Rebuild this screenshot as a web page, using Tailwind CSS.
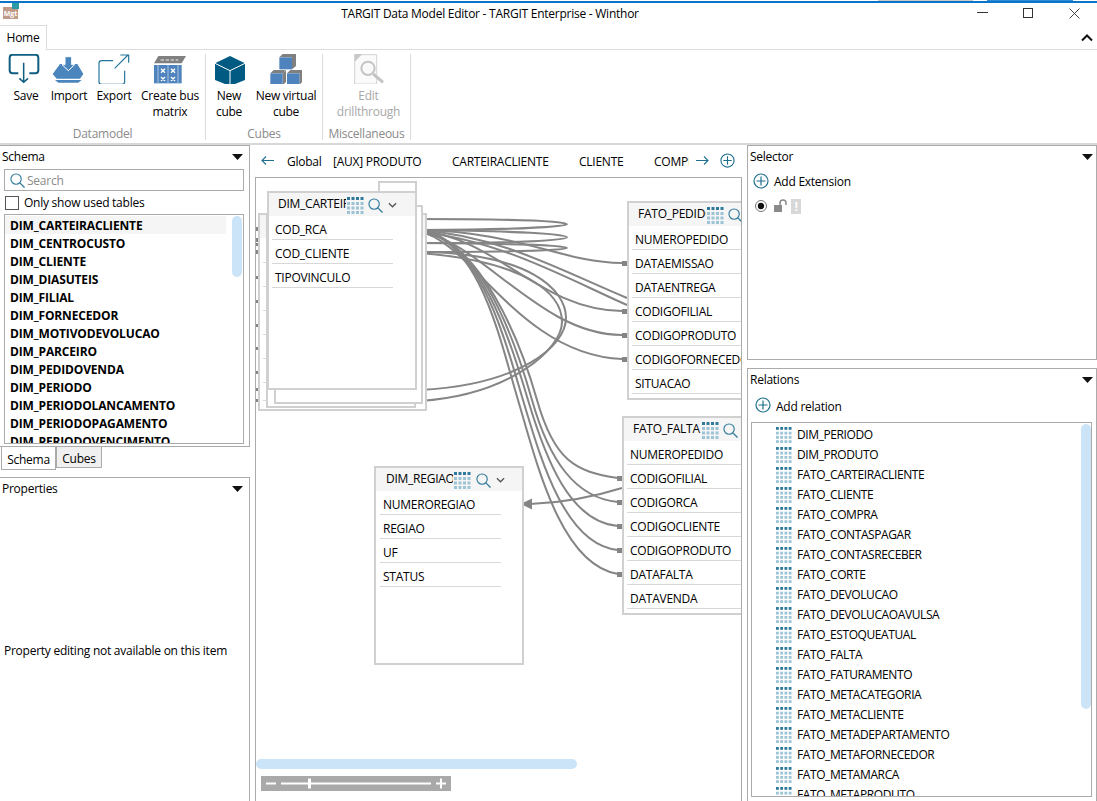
<!DOCTYPE html>
<html lang="en">
<head>
  <meta charset="UTF-8" />
  <title>TARGIT Data Model Editor</title>
  <script src="https://cdn.jsdelivr.net/npm/@tailwindcss/browser@4"></script>
</head>
<body class="bg-white text-black font-['Open_Sans',sans-serif] text-[12px] tracking-[-0.25px] leading-none">
  <svg class="hidden">
    <symbol id="tbl" viewBox="0 0 17 17">
      <g fill="#2f7a9c"><rect x="0" y="0" width="3" height="3"/><rect x="4.5" y="0" width="3" height="3"/><rect x="9" y="0" width="3" height="3"/><rect x="13.5" y="0" width="3" height="3"/></g>
      <g fill="#9cc3d6"><rect x="0" y="5" width="3" height="3"/><rect x="4.5" y="5" width="3" height="3"/><rect x="9" y="5" width="3" height="3"/><rect x="13.5" y="5" width="3" height="3"/><rect x="0" y="9.5" width="3" height="3"/><rect x="4.5" y="9.5" width="3" height="3"/><rect x="9" y="9.5" width="3" height="3"/><rect x="13.5" y="9.5" width="3" height="3"/><rect x="0" y="14" width="3" height="3"/><rect x="4.5" y="14" width="3" height="3"/><rect x="9" y="14" width="3" height="3"/><rect x="13.5" y="14" width="3" height="3"/></g>
    </symbol>
    <symbol id="mag" viewBox="0 0 16 16">
      <circle cx="6.5" cy="6.5" r="5.5" fill="none" stroke="#2f7a9c" stroke-width="1.2"/><path d="M10.5 10.5L15.5 15.5" stroke="#2f7a9c" stroke-width="1.4"/>
    </symbol>
    <symbol id="plus" viewBox="0 0 16 16">
      <circle cx="8" cy="8" r="7" fill="none" stroke="#1f6f8f" stroke-width="1.2"/><path d="M8 3.5V12.5M3.5 8H12.5" stroke="#1f6f8f" stroke-width="1.2"/>
    </symbol>
    <symbol id="chev" viewBox="0 0 10 6">
      <path d="M1 1L5 5L9 1" fill="none" stroke="#555" stroke-width="1.4"/>
    </symbol>
  </svg>

  <div class="relative w-[1097px] h-[801px] overflow-hidden flex flex-col">
    <!-- what shows of the window behind, on the top pixel row -->
    <div class="absolute left-[878px] top-0 w-[95px] h-px bg-[#c9c9c9]"></div>
    <div class="absolute left-[987px] top-0 w-[86px] h-px bg-[#2f8ad6]"></div>

    <!-- title bar -->
    <div class="h-[24px] shrink-0 border-t-2 border-[#0a74c9] mt-px flex items-center relative">
      <div class="absolute left-[3px] top-[4px] w-[15px] h-[12px] bg-[#c09a88] text-white text-[7px] font-bold flex items-center justify-center tracking-normal">Mgt</div>
      <div class="absolute left-[12px] top-0 w-[7px] h-[6px] bg-[#2a9aa5]"></div>
      <div class="absolute left-[341px] top-[5px] w-[298px] text-center whitespace-nowrap">TARGIT Data Model Editor - TARGIT Enterprise - Winthor</div>
      <svg class="absolute left-[977px] top-[9px]" width="11" height="1"><rect width="11" height="1" fill="#333"/></svg>
      <svg class="absolute left-[1023px] top-[5px]" width="10" height="10"><rect x="0.5" y="0.5" width="9" height="9" fill="none" stroke="#333"/></svg>
      <svg class="absolute left-[1069px] top-[5px]" width="11" height="11"><path d="M0.5 0.5L10.5 10.5M10.5 0.5L0.5 10.5" stroke="#444"/></svg>
    </div>

    <!-- tabs -->
    <div class="h-[25px] shrink-0 border-b border-[#dcdcdc] relative">
      <div class="absolute left-0 top-0 w-[47px] h-[25px] bg-white border-t border-r border-[#dcdcdc] flex items-center justify-center">Home</div>
      <svg class="absolute left-[1081px] top-[9px]" width="12" height="8"><path d="M1 6.5L6 1.5L11 6.5" fill="none" stroke="#111" stroke-width="2"/></svg>
    </div>

    <!-- ribbon -->
    <div class="h-[95px] shrink-0 border-b-2 border-[#d8d8d8] flex pt-[4px]">
      <div class="w-[206px] h-[86px] border-r border-[#dcdcdc] flex flex-col">
        <div class="flex h-[68px] pl-[4px]">
          <div class="w-[44px] flex flex-col items-center">
            <svg class="-translate-x-[2px]" width="32" height="30" viewBox="24 12 96 90"><path d="M55 70H38Q29 70 29 61V23Q29 14 38 14H106Q115 14 115 23V61Q115 70 106 70H88" fill="none" stroke="#0f5d80" stroke-width="6"/><path d="M71 38V97M58 85L71 97L84 85" fill="none" stroke="#0f5d80" stroke-width="4.500"/></svg>
            <span class="mt-[6px]">Save</span>
          </div>
          <div class="w-[42px] flex flex-col items-center">
            <svg class="-translate-x-[1px]" width="32" height="30" viewBox="156 12 96 90"><path d="M158 72L180 42H195L205 62L215 42H232L250 72L240 86H170Z" fill="#4a86bd"/><path d="M165 90H245L235 98H175Z" fill="#4a86bd"/><path d="M195 20H215V44H224L205 62L186 44H195Z" fill="#4a86bd" stroke="#fff" stroke-width="3"/></svg>
            <span class="mt-[6px]">Import</span>
          </div>
          <div class="w-[48px] flex flex-col items-center">
            <svg width="32" height="30" viewBox="295 12 96 90"><path d="M340 32H306Q298 32 298 40V95Q298 103 306 103H367Q375 103 375 95V62" fill="none" stroke="#22759a" stroke-width="3.500"/><path d="M345 55L385 15M362 15H387V38" fill="none" stroke="#22759a" stroke-width="3.500"/></svg>
            <span class="mt-[6px]">Export</span>
          </div>
          <div class="w-[64px] flex flex-col items-center">
            <svg width="32" height="30" viewBox="462 12 96 90"><path d="M475 18H558L545 40H462Z" fill="#808080"/><path d="M482 30H535" stroke="#eee" stroke-width="3" stroke-dasharray="10 5"/><rect x="462" y="45" width="83" height="55" fill="#4f83bd"/><path d="M474 45V100M504 45V100M534 45V100" stroke="#a9c6e2" stroke-width="3"/><path d="M483 56L495 68M495 56L483 68M513 56L525 68M525 56L513 68M483 81L495 93M495 81L483 93M513 81L525 93M525 81L513 93" stroke="#fff" stroke-width="4"/></svg>
            <span class="mt-[5px] text-center leading-[16px] -translate-y-[1px]">Create bus<br>matrix</span>
          </div>
        </div>
        <div class="text-center text-[#8a8a8a] mt-[6px]">Datamodel</div>
      </div>
      <div class="w-[117px] h-[86px] border-r border-[#dcdcdc] flex flex-col">
        <div class="flex h-[68px] pl-[4px]">
          <div class="w-[38px] flex flex-col items-center">
            <svg class="translate-x-[1px]" width="32" height="30" viewBox="27 12 96 90"><path d="M75 18L120 40V90L75 108L30 90V40Z" fill="#005a82"/><path d="M30 40L75 62L120 40M75 62V108" fill="none" stroke="#fff" stroke-width="3"/></svg>
            <span class="mt-[5px] text-center leading-[16px] -translate-y-[1px]">New<br>cube</span>
          </div>
          <div class="w-[72px] ml-[2px] flex flex-col items-center">
            <svg width="32" height="30" viewBox="194 12 96 90">
              <path d="M222 22L232 12H272L260 22ZM260 22L272 12V48L260 58Z" fill="#808080"/><rect x="222" y="22" width="38" height="36" fill="#4f83bd"/>
              <path d="M195 70L205 60H240L232 70ZM232 70L242 60V96L232 106Z" fill="#808080"/><rect x="195" y="70" width="37" height="36" fill="#4f83bd"/>
              <path d="M245 70L255 60H290L282 70ZM282 70L290 60V96L282 106Z" fill="#808080"/><rect x="245" y="70" width="37" height="36" fill="#4f83bd"/>
            </svg>
            <span class="mt-[5px] text-center leading-[16px] -translate-y-[1px]">New virtual<br>cube</span>
          </div>
        </div>
        <div class="text-center text-[#8a8a8a] mt-[6px]">Cubes</div>
      </div>
      <div class="w-[88px] h-[86px] border-r border-[#dcdcdc] flex flex-col">
        <div class="h-[68px] flex flex-col items-center translate-x-[2px]">
          <svg width="32" height="30" viewBox="442 12 96 90"><path d="M447 14H513V102H447Z" fill="#fafafa" stroke="#d4d4d4" stroke-width="3"/><path d="M447 12H470L447 35Z" fill="#c8c8c8"/><circle cx="487" cy="55" r="20" fill="none" stroke="#c4c4c4" stroke-width="6"/><path d="M503 72L532 97" stroke="#c4c4c4" stroke-width="9"/></svg>
          <span class="mt-[5px] text-center leading-[16px] -translate-y-[1px] text-[#a8a8a8]">Edit<br>drillthrough</span>
        </div>
        <div class="text-center text-[#8a8a8a] mt-[6px]">Miscellaneous</div>
      </div>
    </div>

    <div class="flex flex-1 min-h-0">
      <!-- left column -->
      <div class="w-[250px] shrink-0 flex flex-col">
        <div class="h-[302px] border-r border-b border-t border-[#ababab] relative">
          <div class="absolute left-[2px] top-[5px]">Schema</div>
          <svg class="absolute left-[232px] top-[8px]" width="11" height="6"><path d="M0 0H11L5.5 6Z" fill="#111"/></svg>
          <div class="absolute left-[4px] top-[23px] w-[240px] h-[22px] border border-[#ababab] flex items-center pl-[5px] pt-[1px] gap-[2px] text-[#8a8a8a]">
            <svg width="15" height="15"><use href="#mag"/></svg>Search
          </div>
          <div class="absolute left-[5px] top-[50px] flex items-center gap-[5px]">
            <span class="block w-[14px] h-[14px] border border-[#555]"></span>Only show used tables
          </div>
          <div class="absolute left-[4px] top-[68px] w-[240px] h-[230px] border border-[#ababab] overflow-hidden pt-[1px] font-bold tracking-[-0.15px]">
            <div class="h-[18px] pl-[5px] pt-[2px] w-[221px] flex items-center bg-[#f5f5f5]">DIM_CARTEIRACLIENTE</div>
            <div class="h-[18px] pl-[5px] pt-[2px] flex items-center">DIM_CENTROCUSTO</div>
            <div class="h-[18px] pl-[5px] pt-[2px] flex items-center">DIM_CLIENTE</div>
            <div class="h-[18px] pl-[5px] pt-[2px] flex items-center">DIM_DIASUTEIS</div>
            <div class="h-[18px] pl-[5px] pt-[2px] flex items-center">DIM_FILIAL</div>
            <div class="h-[18px] pl-[5px] pt-[2px] flex items-center">DIM_FORNECEDOR</div>
            <div class="h-[18px] pl-[5px] pt-[2px] flex items-center">DIM_MOTIVODEVOLUCAO</div>
            <div class="h-[18px] pl-[5px] pt-[2px] flex items-center">DIM_PARCEIRO</div>
            <div class="h-[18px] pl-[5px] pt-[2px] flex items-center">DIM_PEDIDOVENDA</div>
            <div class="h-[18px] pl-[5px] pt-[2px] flex items-center">DIM_PERIODO</div>
            <div class="h-[18px] pl-[5px] pt-[2px] flex items-center">DIM_PERIODOLANCAMENTO</div>
            <div class="h-[18px] pl-[5px] pt-[2px] flex items-center">DIM_PERIODOPAGAMENTO</div>
            <div class="h-[18px] pl-[5px] pt-[2px] flex items-center">DIM_PERIODOVENCIMENTO</div>
            <div class="absolute left-[227px] top-[1px] w-[10px] h-[61px] rounded-[5px] bg-[#cce4f7]"></div>
          </div>
        </div>
        <div class="h-[30px] border-r border-transparent relative">
          <div class="absolute left-[1px] top-0 w-[55px] h-[23px] border-x border-b border-[#ababab] bg-white pt-[3px] flex items-center justify-center">Schema</div>
          <div class="absolute left-[56px] top-0 w-[46px] h-[21px] border-x border-b border-[#ababab] bg-[#f0f0f0] pt-[3px] flex items-center justify-center">Cubes</div>
        </div>
        <div class="flex-1 border-r border-t border-[#ababab] relative">
          <div class="absolute left-[2px] top-[5px]">Properties</div>
          <svg class="absolute left-[232px] top-[8px]" width="11" height="6"><path d="M0 0H11L5.5 6Z" fill="#111"/></svg>
          <div class="absolute left-[4px] top-[167px] whitespace-nowrap">Property editing not available on this item</div>
        </div>
      </div>

      <!-- canvas column -->
      <div class="w-[497px] shrink-0 flex flex-col">
        <div class="h-[32px] shrink-0 relative">
          <svg class="absolute left-[11px] top-[11px]" width="13" height="9"><path d="M13 4.5H1M5 0.5L1 4.5L5 8.5" fill="none" stroke="#1f6f8f" stroke-width="1.1"/></svg>
          <span class="absolute left-[37px] top-[11px]">Global</span>
          <span class="absolute left-[83px] top-[11px]">[AUX] PRODUTO</span>
          <span class="absolute left-[202px] top-[11px]">CARTEIRACLIENTE</span>
          <span class="absolute left-[329px] top-[11px]">CLIENTE</span>
          <span class="absolute left-[404px] top-[11px] w-[35px] overflow-hidden whitespace-nowrap">COMPRA</span>
          <svg class="absolute left-[446px] top-[11px]" width="13" height="9"><path d="M0 4.5H12M8 0.5L12 4.5L8 8.5" fill="none" stroke="#1f6f8f" stroke-width="1.1"/></svg>
          <svg class="absolute left-[470px] top-[8px]" width="15" height="15"><use href="#plus"/></svg>
        </div>

        <div class="relative flex-1 ml-[5px] w-[487px] border-t border-x border-[#ababab] overflow-hidden">
          <!-- wires, drawn in page coordinates -->
          <svg class="absolute left-0 top-0" width="485" height="623" viewBox="256 178 485 623" fill="none" stroke="#858585" stroke-width="2">
            <path d="M420 219C616 219 616 229 420 230"/>
            <path d="M420 230C616 232 616 243 420 243"/>
            <path d="M420 243C616 244 616 252 420 252"/>
            <path d="M420 252C530 253 566 290 566 318S520 385 420 390"/>
            <path d="M420 253C530 262 562 295 562 322S510 395 420 401"/>
            <path d="M420 230C520 232 560 262 622 263"/>
            <path d="M420 230C500 236 560 270 627 298"/>
            <path d="M420 232C500 240 570 280 627 305"/>
            <path d="M420 230C500 240 540 310 622 311"/>
            <path d="M420 232C480 240 540 335 622 335"/>
            <path d="M420 232C470 240 520 355 622 359"/>
            <path d="M420 230C480 240 500 340 518 400S560 565 618 574"/>
            <path d="M420 230C480 240 505 340 523 400S565 545 618 550"/>
            <path d="M420 230C480 240 510 340 528 400S570 522 618 526"/>
            <path d="M420 230C480 240 515 340 532 400S575 498 618 502"/>
            <path d="M420 230C480 240 520 340 537 400S575 472 618 478"/>
            <path d="M622 488C590 498 560 503 530 504"/>
            <path d="M523 504L531 500V508Z" fill="#858585"/>
            <g fill="#858585" stroke="none">
              <rect x="622" y="261" width="5" height="5"/><rect x="622" y="309" width="5" height="5"/><rect x="622" y="333" width="5" height="5"/><rect x="622" y="357" width="5" height="5"/>
              <rect x="617" y="476" width="5" height="5"/><rect x="617" y="500" width="5" height="5"/><rect x="617" y="524" width="5" height="5"/><rect x="617" y="548" width="5" height="5"/><rect x="617" y="572" width="5" height="5"/>
              <rect x="256" y="227" width="2" height="4"/><rect x="256" y="238" width="2" height="4"/><rect x="256" y="243" width="2" height="3"/><rect x="256" y="250" width="2" height="4"/><rect x="256" y="276" width="2" height="3"/><rect x="256" y="300" width="2" height="3"/><rect x="256" y="324" width="2" height="3"/><rect x="256" y="347" width="2" height="3"/><rect x="256" y="371" width="2" height="3"/><rect x="256" y="388" width="2" height="3"/><rect x="256" y="399" width="2" height="3"/>
            </g>
          </svg>

          <!-- stacked cards behind DIM_CARTEIRACLIENTE -->
          <div class="absolute left-[122px] top-[3px] w-[39px] h-[60px] border-2 border-[#d0d0d0] bg-white"></div>
          <div class="absolute left-[2px] top-[35px] w-[169px] h-[198px] border-2 border-[#d0d0d0] bg-white">
            <div class="h-[23px] bg-[#f5f5f5]"></div>
            <div class="w-[5px] ml-[3px] mt-[24px] h-[24px] border-t border-[#d8d8d8]"></div>
            <div class="w-[5px] ml-[3px] h-[24px] border-t border-[#d8d8d8]"></div>
            <div class="w-[5px] ml-[3px] h-[24px] border-t border-[#d8d8d8]"></div>
            <div class="w-[5px] ml-[3px] h-[24px] border-t border-[#d8d8d8]"></div>
            <div class="w-[5px] ml-[3px] h-[24px] border-t border-[#d8d8d8]"></div>
            <div class="w-[5px] ml-[3px] h-[18px] border-t border-[#d8d8d8]"></div>
            <div class="w-[5px] ml-[3px] border-t border-[#d8d8d8]"></div>
          </div>
          <div class="absolute left-[10px] top-[35px] w-[150px] h-[195px] border-2 border-[#d0d0d0] bg-white"></div>
          <div class="absolute left-[18px] top-[27px] w-[149px] h-[199px] border-2 border-[#d0d0d0] bg-white"></div>

          <!-- DIM_CARTEIRACLIENTE -->
          <div class="absolute left-[11px] top-[13px] w-[150px] h-[199px] border-2 border-[#d0d0d0] bg-white">
            <div class="h-[23px] bg-[#f5f5f5] relative">
              <span class="absolute left-[9px] top-[5px] w-[68px] overflow-hidden whitespace-nowrap">DIM_CARTEIRACLIENTE</span>
              <svg class="absolute left-[78px] top-[4px]" width="17" height="17"><use href="#tbl"/></svg>
              <svg class="absolute left-[99px] top-[5px]" width="15" height="15"><use href="#mag"/></svg>
              <svg class="absolute left-[119px] top-[9px]" width="9" height="6"><use href="#chev"/></svg>
            </div>
            <div class="ml-[3px] w-[121px]">
              <div class="h-[24px] border-b border-[#d8d8d8] flex items-center pl-[3px] pt-[4px]">COD_RCA</div>
              <div class="h-[24px] border-b border-[#d8d8d8] flex items-center pl-[3px] pt-[4px]">COD_CLIENTE</div>
              <div class="h-[24px] border-b border-[#d8d8d8] flex items-center pl-[3px] pt-[4px]">TIPOVINCULO</div>
            </div>
          </div>

          <!-- FATO_PEDIDOVENDA -->
          <div class="absolute left-[371px] top-[23px] w-[130px] h-[199px] border-2 border-r-0 border-[#d0d0d0] bg-white">
            <div class="h-[23px] bg-[#f5f5f5] relative">
              <span class="absolute left-[9px] top-[5px] w-[68px] overflow-hidden whitespace-nowrap">FATO_PEDIDOVENDA</span>
              <svg class="absolute left-[78px] top-[4px]" width="17" height="17"><use href="#tbl"/></svg>
              <svg class="absolute left-[99px] top-[5px]" width="15" height="15"><use href="#mag"/></svg>
            </div>
            <div class="ml-[3px]">
              <div class="h-[24px] border-b border-[#d8d8d8] flex items-center pl-[3px] pt-[4px] whitespace-nowrap">NUMEROPEDIDO</div>
              <div class="h-[24px] border-b border-[#d8d8d8] flex items-center pl-[3px] pt-[4px] whitespace-nowrap">DATAEMISSAO</div>
              <div class="h-[24px] border-b border-[#d8d8d8] flex items-center pl-[3px] pt-[4px] whitespace-nowrap">DATAENTREGA</div>
              <div class="h-[24px] border-b border-[#d8d8d8] flex items-center pl-[3px] pt-[4px] whitespace-nowrap">CODIGOFILIAL</div>
              <div class="h-[24px] border-b border-[#d8d8d8] flex items-center pl-[3px] pt-[4px] whitespace-nowrap">CODIGOPRODUTO</div>
              <div class="h-[24px] border-b border-[#d8d8d8] flex items-center pl-[3px] pt-[4px] whitespace-nowrap">CODIGOFORNECEDOR</div>
              <div class="h-[24px] border-b border-[#d8d8d8] flex items-center pl-[3px] pt-[4px] whitespace-nowrap">SITUACAO</div>
            </div>
          </div>

          <!-- FATO_FALTA -->
          <div class="absolute left-[366px] top-[238px] w-[135px] h-[199px] border-2 border-r-0 border-[#d0d0d0] bg-white">
            <div class="h-[23px] bg-[#f5f5f5] relative">
              <span class="absolute left-[9px] top-[5px] w-[68px] overflow-hidden whitespace-nowrap">FATO_FALTA</span>
              <svg class="absolute left-[78px] top-[4px]" width="17" height="17"><use href="#tbl"/></svg>
              <svg class="absolute left-[99px] top-[5px]" width="15" height="15"><use href="#mag"/></svg>
            </div>
            <div class="ml-[3px]">
              <div class="h-[24px] border-b border-[#d8d8d8] flex items-center pl-[3px] pt-[4px]">NUMEROPEDIDO</div>
              <div class="h-[24px] border-b border-[#d8d8d8] flex items-center pl-[3px] pt-[4px]">CODIGOFILIAL</div>
              <div class="h-[24px] border-b border-[#d8d8d8] flex items-center pl-[3px] pt-[4px]">CODIGORCA</div>
              <div class="h-[24px] border-b border-[#d8d8d8] flex items-center pl-[3px] pt-[4px]">CODIGOCLIENTE</div>
              <div class="h-[24px] border-b border-[#d8d8d8] flex items-center pl-[3px] pt-[4px]">CODIGOPRODUTO</div>
              <div class="h-[24px] border-b border-[#d8d8d8] flex items-center pl-[3px] pt-[4px]">DATAFALTA</div>
              <div class="h-[24px] border-b border-[#d8d8d8] flex items-center pl-[3px] pt-[4px]">DATAVENDA</div>
            </div>
          </div>

          <!-- DIM_REGIAO -->
          <div class="absolute left-[118px] top-[288px] w-[150px] h-[199px] border-2 border-[#d0d0d0] bg-white">
            <div class="h-[23px] bg-[#f5f5f5] relative">
              <span class="absolute left-[10px] top-[5px] w-[67px] overflow-hidden whitespace-nowrap">DIM_REGIAO</span>
              <svg class="absolute left-[78px] top-[4px]" width="17" height="17"><use href="#tbl"/></svg>
              <svg class="absolute left-[100px] top-[5px]" width="15" height="15"><use href="#mag"/></svg>
              <svg class="absolute left-[120px] top-[9px]" width="9" height="6"><use href="#chev"/></svg>
            </div>
            <div class="ml-[4px] w-[121px]">
              <div class="h-[24px] border-b border-[#d8d8d8] flex items-center pl-[3px] pt-[4px]">NUMEROREGIAO</div>
              <div class="h-[24px] border-b border-[#d8d8d8] flex items-center pl-[3px] pt-[4px]">REGIAO</div>
              <div class="h-[24px] border-b border-[#d8d8d8] flex items-center pl-[3px] pt-[4px]">UF</div>
              <div class="h-[24px] border-b border-[#d8d8d8] flex items-center pl-[3px] pt-[4px]">STATUS</div>
            </div>
          </div>

          <!-- scrollbar and zoom -->
          <div class="absolute left-0 top-[581px] w-[321px] h-[10px] rounded-[5px] bg-[#cce4f7]"></div>
          <div class="absolute left-[5px] top-[598px] w-[190px] h-[15px] bg-[#a9a9a9]">
            <svg width="190" height="15" fill="white"><rect x="5" y="6.500" width="10" height="2"/><rect x="20" y="6.500" width="150" height="2"/><rect x="47" y="2.500" width="3" height="10"/><rect x="175" y="6.500" width="10" height="2"/><rect x="179" y="2.500" width="2" height="10"/></svg>
          </div>
        </div>
      </div>

      <!-- right column -->
      <div class="w-[350px] shrink-0 flex flex-col">
        <div class="h-[215px] border border-[#ababab] relative">
          <div class="absolute left-[2px] top-[5px]">Selector</div>
          <svg class="absolute left-[334px] top-[8px]" width="11" height="6"><path d="M0 0H11L5.500 6Z" fill="#111"/></svg>
          <svg class="absolute left-[5px] top-[27px]" width="16" height="16"><use href="#plus"/></svg>
          <div class="absolute left-[26px] top-[30px]">Add Extension</div>
          <svg class="absolute left-[6px] top-[53px]" width="14" height="14"><circle cx="7" cy="7" r="5.500" fill="none" stroke="#777"/><circle cx="7" cy="7" r="3.200" fill="#111"/></svg>
          <svg class="absolute left-[26px] top-[53px]" width="13" height="13"><path d="M6 6V4Q6 1 9 1T12 4V6" fill="none" stroke="#8a8a8a" stroke-width="1.500"/><rect x="0" y="6" width="8" height="7" fill="#8a8a8a"/></svg>
          <div class="absolute left-[43px] top-[53px] w-[10px] h-[15px] bg-[#d8d8d8] text-white font-bold flex items-center justify-center">!</div>
        </div>
        <div class="h-[8px] shrink-0"></div>
        <div class="flex-1 border-l border-t border-r border-[#ababab] relative">
          <div class="absolute left-[2px] top-[5px]">Relations</div>
          <svg class="absolute left-[334px] top-[8px]" width="11" height="6"><path d="M0 0H11L5.500 6Z" fill="#111"/></svg>
          <svg class="absolute left-[7px] top-[28px]" width="16" height="16"><use href="#plus"/></svg>
          <div class="absolute left-[28px] top-[32px]">Add relation</div>
          <div class="absolute left-[3px] top-[53px] w-[341px] h-[375px] border border-[#ababab] overflow-hidden pt-[2px] tracking-[-0.4px]">
            <div class="h-[20px] flex items-center gap-[5px] pl-[24px]"><svg class="shrink-0" width="16" height="16"><use href="#tbl"/></svg>DIM_PERIODO</div>
            <div class="h-[20px] flex items-center gap-[5px] pl-[24px]"><svg class="shrink-0" width="16" height="16"><use href="#tbl"/></svg>DIM_PRODUTO</div>
            <div class="h-[20px] flex items-center gap-[5px] pl-[24px]"><svg class="shrink-0" width="16" height="16"><use href="#tbl"/></svg>FATO_CARTEIRACLIENTE</div>
            <div class="h-[20px] flex items-center gap-[5px] pl-[24px]"><svg class="shrink-0" width="16" height="16"><use href="#tbl"/></svg>FATO_CLIENTE</div>
            <div class="h-[20px] flex items-center gap-[5px] pl-[24px]"><svg class="shrink-0" width="16" height="16"><use href="#tbl"/></svg>FATO_COMPRA</div>
            <div class="h-[20px] flex items-center gap-[5px] pl-[24px]"><svg class="shrink-0" width="16" height="16"><use href="#tbl"/></svg>FATO_CONTASPAGAR</div>
            <div class="h-[20px] flex items-center gap-[5px] pl-[24px]"><svg class="shrink-0" width="16" height="16"><use href="#tbl"/></svg>FATO_CONTASRECEBER</div>
            <div class="h-[20px] flex items-center gap-[5px] pl-[24px]"><svg class="shrink-0" width="16" height="16"><use href="#tbl"/></svg>FATO_CORTE</div>
            <div class="h-[20px] flex items-center gap-[5px] pl-[24px]"><svg class="shrink-0" width="16" height="16"><use href="#tbl"/></svg>FATO_DEVOLUCAO</div>
            <div class="h-[20px] flex items-center gap-[5px] pl-[24px]"><svg class="shrink-0" width="16" height="16"><use href="#tbl"/></svg>FATO_DEVOLUCAOAVULSA</div>
            <div class="h-[20px] flex items-center gap-[5px] pl-[24px]"><svg class="shrink-0" width="16" height="16"><use href="#tbl"/></svg>FATO_ESTOQUEATUAL</div>
            <div class="h-[20px] flex items-center gap-[5px] pl-[24px]"><svg class="shrink-0" width="16" height="16"><use href="#tbl"/></svg>FATO_FALTA</div>
            <div class="h-[20px] flex items-center gap-[5px] pl-[24px]"><svg class="shrink-0" width="16" height="16"><use href="#tbl"/></svg>FATO_FATURAMENTO</div>
            <div class="h-[20px] flex items-center gap-[5px] pl-[24px]"><svg class="shrink-0" width="16" height="16"><use href="#tbl"/></svg>FATO_METACATEGORIA</div>
            <div class="h-[20px] flex items-center gap-[5px] pl-[24px]"><svg class="shrink-0" width="16" height="16"><use href="#tbl"/></svg>FATO_METACLIENTE</div>
            <div class="h-[20px] flex items-center gap-[5px] pl-[24px]"><svg class="shrink-0" width="16" height="16"><use href="#tbl"/></svg>FATO_METADEPARTAMENTO</div>
            <div class="h-[20px] flex items-center gap-[5px] pl-[24px]"><svg class="shrink-0" width="16" height="16"><use href="#tbl"/></svg>FATO_METAFORNECEDOR</div>
            <div class="h-[20px] flex items-center gap-[5px] pl-[24px]"><svg class="shrink-0" width="16" height="16"><use href="#tbl"/></svg>FATO_METAMARCA</div>
            <div class="h-[20px] flex items-center gap-[5px] pl-[24px]"><svg class="shrink-0" width="16" height="16"><use href="#tbl"/></svg>FATO_METAPRODUTO</div>
            <div class="absolute left-[329px] top-[1px] w-[10px] h-[285px] rounded-[5px] bg-[#cce4f7]"></div>
          </div>
        </div>
      </div>
    </div>
  </div>
</body>
</html>
